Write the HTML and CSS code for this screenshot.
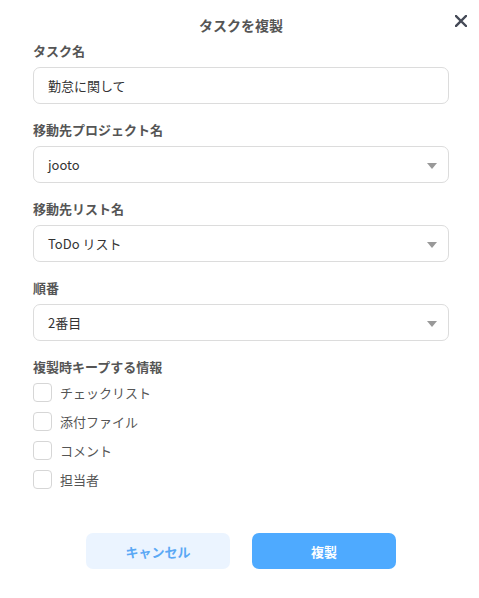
FILE: index.html
```html
<!DOCTYPE html>
<html lang="ja">
<head>
  <meta charset="UTF-8">
  <meta name="viewport" content="width=device-width, initial-scale=1">
  <title>タスクを複製</title>
  <link rel="stylesheet" href="styles.css">
</head>
<body>

  <div class="modal">
    <h1 class="modal-title">タスクを複製</h1>
    <button class="close-btn" aria-label="閉じる">
      <svg width="12" height="12" viewBox="0 0 12 12">
        <path d="M1 1 L11 11 M11 1 L1 11" stroke="#454a57" stroke-width="2.4" stroke-linecap="square" fill="none"/>
      </svg>
    </button>

    <div class="field">
      <label class="field-label">タスク名</label>
      <div class="input">勤怠に関して</div>
    </div>

    <div class="field">
      <label class="field-label">移動先プロジェクト名</label>
      <div class="input select">jooto</div>
    </div>

    <div class="field">
      <label class="field-label">移動先リスト名</label>
      <div class="input select">ToDo リスト</div>
    </div>

    <div class="field">
      <label class="field-label">順番</label>
      <div class="input select">2番目</div>
    </div>

    <div class="field">
      <label class="field-label">複製時キープする情報</label>
      <div class="check-list">
        <label class="check"><span class="box"></span>チェックリスト</label>
        <label class="check"><span class="box"></span>添付ファイル</label>
        <label class="check"><span class="box"></span>コメント</label>
        <label class="check"><span class="box"></span>担当者</label>
      </div>
    </div>

    <div class="actions">
      <button class="btn btn-cancel">キャンセル</button>
      <button class="btn btn-primary">複製</button>
    </div>
  </div>

</body>
</html>
```

FILE: styles.css
```css
body {
  margin: 0;
  font-family: 'Noto Sans CJK JP', 'Noto Sans', sans-serif;
  background: #fff;
  color: #333;
}

.modal {
  position: relative;
  padding: 15px 30px 0 33px;
}

.modal-title {
  margin: 0 0 6px;
  font-size: 14px;
  line-height: 20px;
  font-weight: bold;
  color: #555;
  text-align: center;
}

.close-btn {
  position: absolute;
  top: 15px;
  right: 12px;
  width: 12px;
  height: 12px;
  padding: 0;
  border: none;
  background: none;
  cursor: pointer;
  display: flex;
}

.field {
  margin-bottom: 16px;
}

.field-label {
  display: block;
  margin-bottom: 6px;
  font-size: 13px;
  line-height: 20px;
  font-weight: bold;
  color: #555;
}

.input {
  position: relative;
  box-sizing: border-box;
  height: 37px;
  padding: 0 14px;
  border: 1px solid #dcdcdc;
  border-radius: 7px;
  font-size: 13px;
  line-height: 35px;
  color: #333;
}

.select::after {
  content: "";
  position: absolute;
  right: 11px;
  top: 16px;
  border-left: 5px solid transparent;
  border-right: 5px solid transparent;
  border-top: 6px solid #999;
}

.check-list {
  display: flex;
  flex-direction: column;
  gap: 10px;
}

.check {
  display: flex;
  align-items: center;
  gap: 8px;
  height: 19px;
  font-size: 13px;
  color: #555;
}

.box {
  box-sizing: border-box;
  width: 19px;
  height: 19px;
  border: 1px solid #d6d6d6;
  border-radius: 4px;
}

.actions {
  display: flex;
  justify-content: center;
  gap: 22px;
  margin-top: 44px;
}

.btn {
  width: 144px;
  height: 36px;
  border: none;
  border-radius: 7px;
  font-family: inherit;
  font-size: 13px;
  font-weight: bold;
  cursor: pointer;
}

.btn-cancel {
  background-color: #ebf4ff;
  color: #5aa8f5;
}

.btn-primary {
  background-color: #4eaaff;
  color: #fff;
}
```
